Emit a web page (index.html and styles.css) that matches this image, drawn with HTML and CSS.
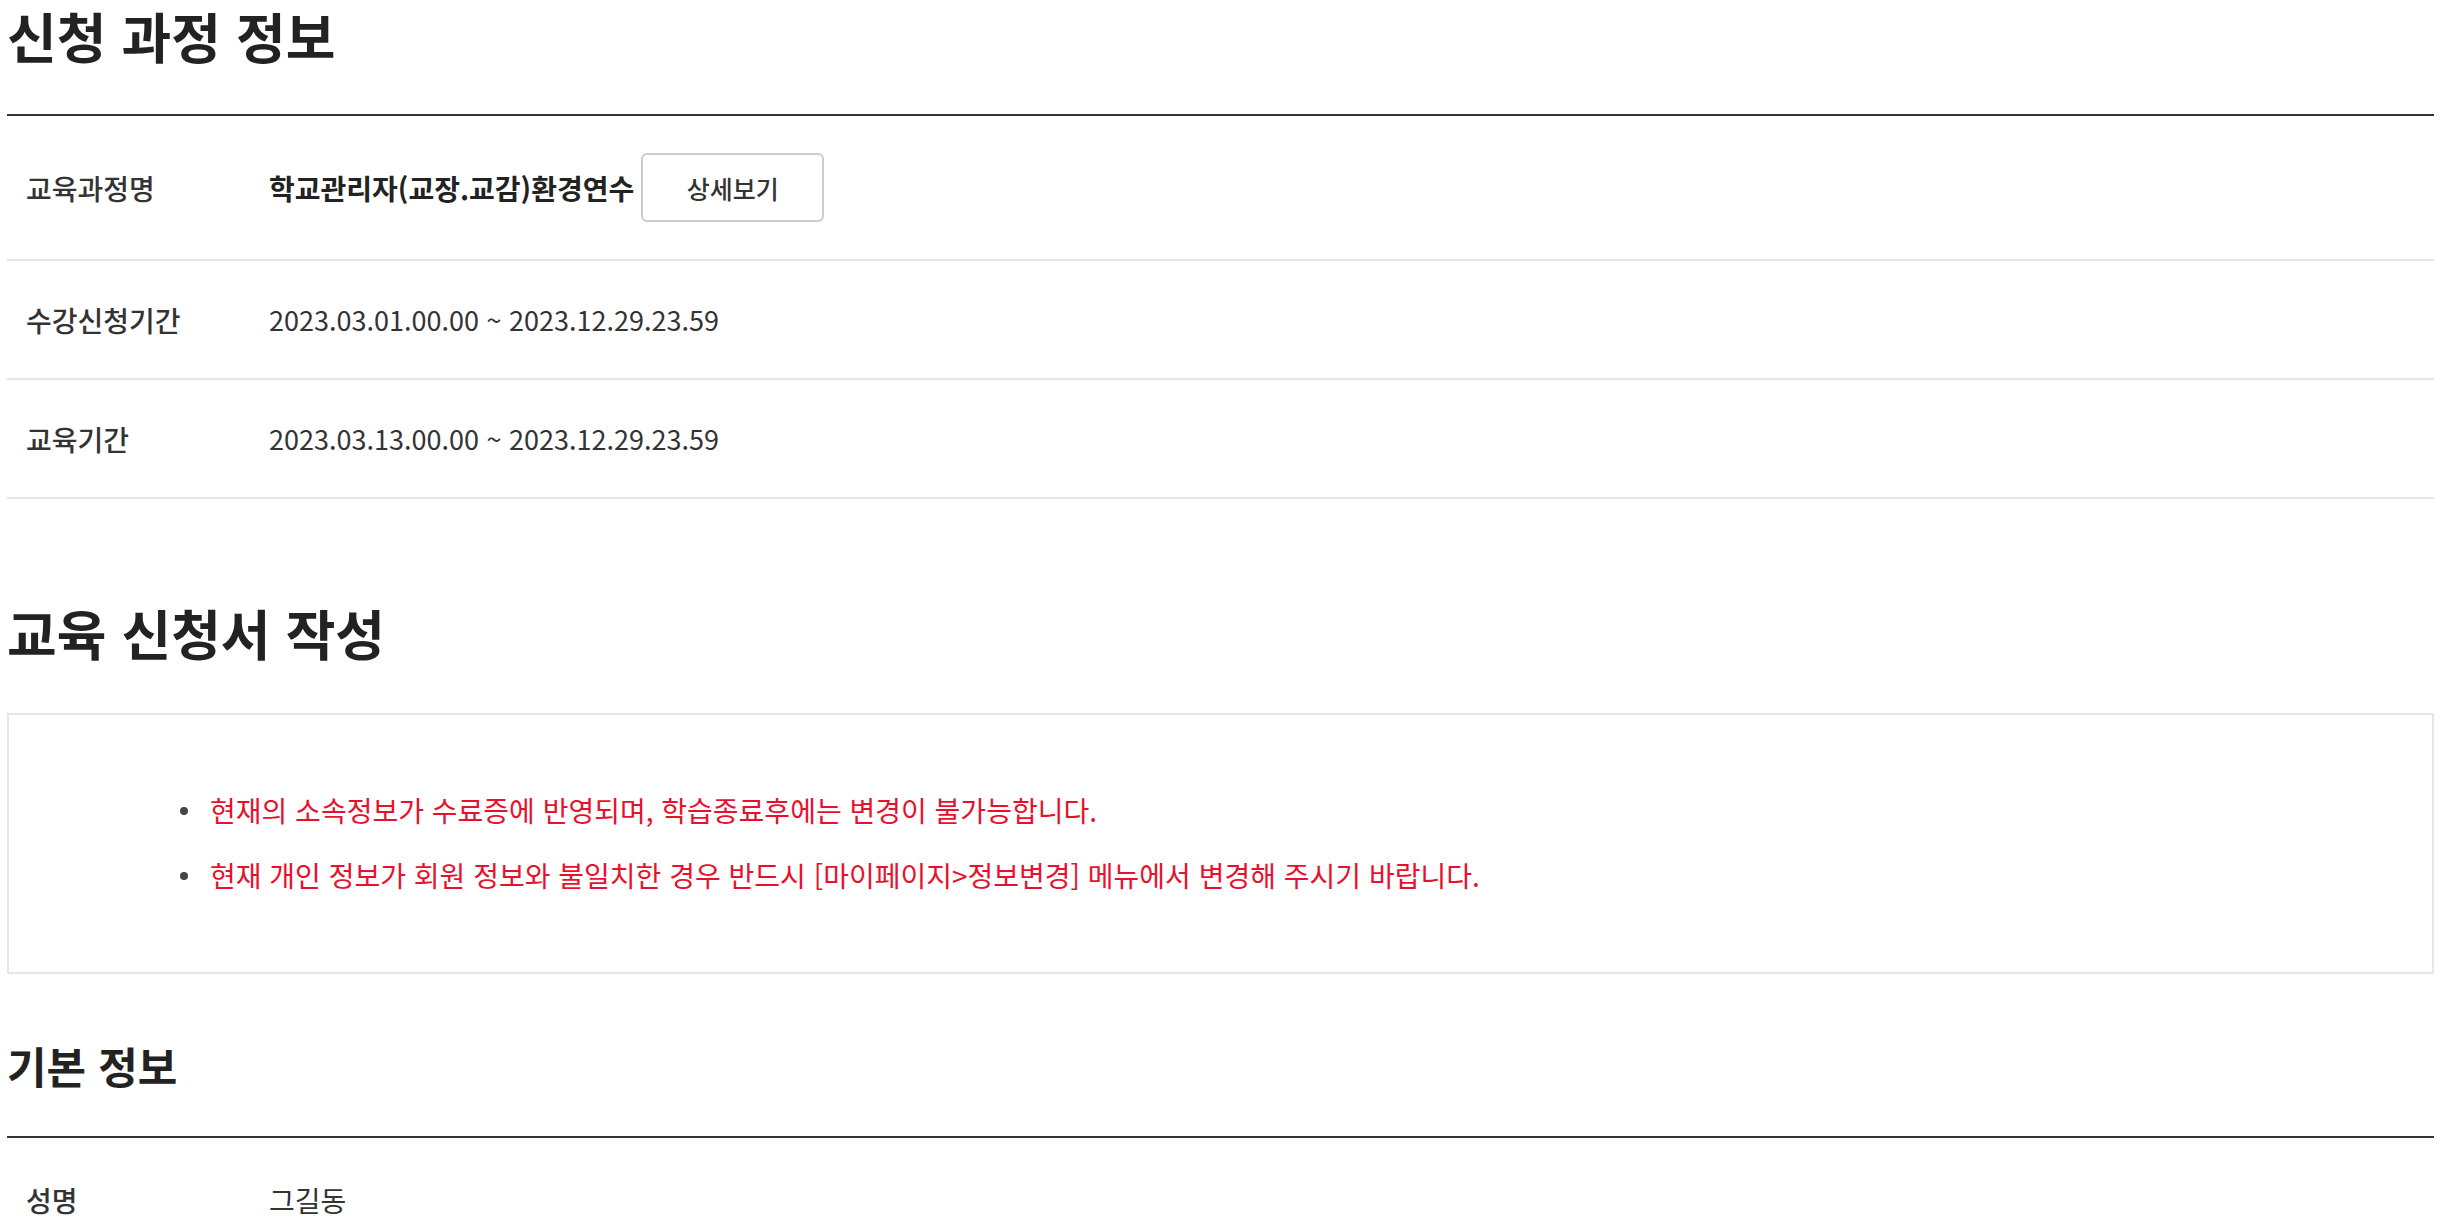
FILE: index.html
```html
<!DOCTYPE html>
<html lang="ko">
<head>
<meta charset="utf-8">
<title>교육 신청</title>
<link rel="stylesheet" href="styles.css">
</head>
<body>
<div class="page">
  <section class="sec sec-course">
    <h2 class="sec-title">신청 과정 정보</h2>
    <div class="info-table">
      <div class="row row-course">
        <div class="th">교육과정명</div>
        <div class="td"><strong class="course-name">학교관리자(교장.교감)환경연수</strong><button type="button" class="btn">상세보기</button></div>
      </div>
      <div class="row">
        <div class="th">수강신청기간</div>
        <div class="td date">2023.03.01.00.00 ~ 2023.12.29.23.59</div>
      </div>
      <div class="row">
        <div class="th">교육기간</div>
        <div class="td date">2023.03.13.00.00 ~ 2023.12.29.23.59</div>
      </div>
    </div>
  </section>

  <section class="sec sec-form">
    <h2 class="sec-title">교육 신청서 작성</h2>
    <div class="notice">
      <ul class="notice-list">
        <li>현재의 소속정보가 수료증에 반영되며, 학습종료후에는 변경이 불가능합니다.</li>
        <li>현재 개인 정보가 회원 정보와 불일치한 경우 반드시 [마이페이지&gt;정보변경] 메뉴에서 변경해 주시기 바랍니다.</li>
      </ul>
    </div>
  </section>

  <section class="sec sec-basic">
    <h3 class="sub-title">기본 정보</h3>
    <div class="info-table">
      <div class="row row-basic">
        <div class="th">성명</div>
        <div class="td">그길동</div>
      </div>
    </div>
  </section>
</div>
</body>
</html>
```

FILE: styles.css
```css
html, body {
  margin: 0;
  padding: 0;
  background: #ffffff;
  overflow: hidden;
}

body {
  font-family: "Noto Sans CJK KR", "Noto Sans", sans-serif;
  color: #333333;
  font-size: 28px;
}

.page {
  padding: 0 6px 0 7px;
}

.sec-title {
  margin: 11px 0 0;
  font-size: 54px;
  line-height: 50px;
  font-weight: 700;
  color: #222222;
}

.sec-course .sec-title {
  margin-bottom: 53px;
}

.info-table {
  border-top: 2px solid #333333;
}

.row {
  display: grid;
  grid-template-columns: 262px 1fr;
  align-items: center;
  height: 117px;
  border-bottom: 2px solid #e5e5e5;
}

.row-course {
  height: 143px;
}

.th {
  padding-left: 19px;
  font-weight: 500;
  color: #333333;
  font-size: 28px;
}

.td {
  display: flex;
  align-items: center;
  font-size: 28px;
  color: #333333;
}

.td.date {
  font-size: 27px;
}

.course-name {
  font-weight: 700;
  color: #222222;
}

.btn {
  margin-left: 7px;
  width: 183px;
  height: 69px;
  border: 2px solid #cccccc;
  border-radius: 6px;
  background: #ffffff;
  font-family: "Noto Sans CJK KR", "Noto Sans", sans-serif;
  font-size: 25px;
  font-weight: 500;
  color: #333333;
  padding: 0;
}

.sec-form {
  margin-top: 109px;
}

.notice {
  margin-top: 55px;
  border: 2px solid #e6e6e6;
  padding: 75px 0 77px 0;
}

.notice-list {
  list-style: none;
  margin: 0;
  padding: 0 0 0 201px;
  display: flex;
  flex-direction: column;
  gap: 25px;
}

.notice-list li {
  position: relative;
  line-height: 40px;
  font-size: 28px;
  color: #e8112d;
}

.notice-list li::before {
  content: "";
  position: absolute;
  left: -30px;
  top: 17px;
  width: 8px;
  height: 8px;
  border-radius: 50%;
  background: #444444;
}

.sec-basic {
  margin-top: 71px;
}

.sub-title {
  margin: 0 0 51px;
  font-size: 43px;
  line-height: 40px;
  font-weight: 700;
  color: #222222;
}

.row-basic {
  height: 124px;
  border-bottom: none;
}
```
